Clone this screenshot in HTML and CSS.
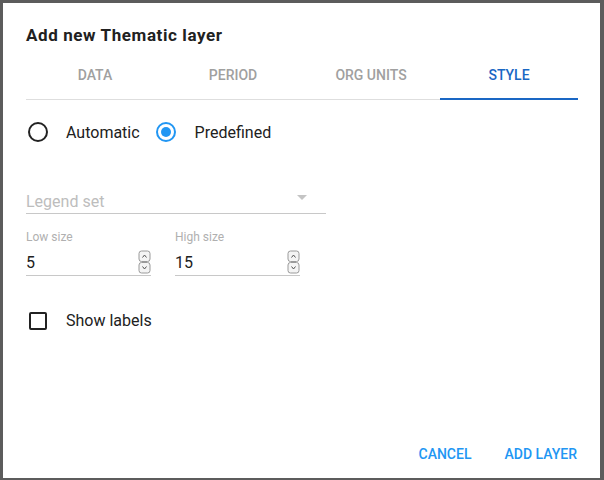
FILE: index.html
```html
<!DOCTYPE html>
<html>
<head>
<meta charset="utf-8">
<link rel="stylesheet" href="styles.css">
</head>
<body>
<div class="dialog">
  <h1 class="title">Add new Thematic layer</h1>
  <div class="tabs">
    <div class="tab">DATA</div>
    <div class="tab">PERIOD</div>
    <div class="tab">ORG UNITS</div>
    <div class="tab active">STYLE</div>
  </div>
  <div class="content">
    <div class="radios">
      <label class="radio"><span class="circle"></span><span class="rlabel">Automatic</span></label>
      <label class="radio checked"><span class="circle"><span class="dot"></span></span><span class="rlabel">Predefined</span></label>
    </div>
    <div class="select">
      <span class="placeholder">Legend set</span>
      <svg class="arrow" width="10" height="5" viewBox="0 0 10 5"><path d="M0 0 L10 0 L5 5 Z" fill="#c4c4c4"/></svg>
    </div>
    <div class="sizes">
      <div class="numfield">
        <div class="flabel">Low size</div>
        <div class="finput"><span class="val">5</span>
          <svg class="spin" width="13" height="24" viewBox="0 0 13 24">
            <rect x="1" y="1" width="11" height="10.5" rx="2.5" fill="#f4f4f4" stroke="#9a9a9a" stroke-width="1"/>
            <rect x="1" y="12.5" width="11" height="10.5" rx="2.5" fill="#f4f4f4" stroke="#9a9a9a" stroke-width="1"/>
            <path d="M4.5 7.5 L6.5 5 L8.5 7.5" fill="none" stroke="#555" stroke-width="1"/>
            <path d="M4.5 16.5 L6.5 19 L8.5 16.5" fill="none" stroke="#555" stroke-width="1"/>
          </svg>
        </div>
      </div>
      <div class="numfield">
        <div class="flabel">High size</div>
        <div class="finput"><span class="val">15</span>
          <svg class="spin" width="13" height="24" viewBox="0 0 13 24">
            <rect x="1" y="1" width="11" height="10.5" rx="2.5" fill="#f4f4f4" stroke="#9a9a9a" stroke-width="1"/>
            <rect x="1" y="12.5" width="11" height="10.5" rx="2.5" fill="#f4f4f4" stroke="#9a9a9a" stroke-width="1"/>
            <path d="M4.5 7.5 L6.5 5 L8.5 7.5" fill="none" stroke="#555" stroke-width="1"/>
            <path d="M4.5 16.5 L6.5 19 L8.5 16.5" fill="none" stroke="#555" stroke-width="1"/>
          </svg>
        </div>
      </div>
    </div>
    <label class="check"><span class="box"></span><span class="clabel">Show labels</span></label>
  </div>
  <div class="actions">
    <button class="btn">CANCEL</button>
    <button class="btn">ADD LAYER</button>
  </div>
</div>
</body>
</html>
```

FILE: styles.css
```css
html, body {
  margin: 0;
  padding: 0;
}
body {
  background: #5c5c5c;
  width: 604px;
  height: 480px;
  overflow: hidden;
  font-family: Roboto, "Liberation Sans", sans-serif;
}
.dialog {
  margin: 3px 0 0 3px;
  width: 597px;
  height: 475px;
  background: #fff;
  box-sizing: border-box;
  padding: 22px 22px 0 23px;
  display: flex;
  flex-direction: column;
}
.title {
  margin: 0;
  font-size: 17px;
  font-weight: 700;
  line-height: 20px;
  color: #212121;
  letter-spacing: 0.6px;
}
.tabs {
  display: flex;
  margin-top: 6px;
  width: 552px;
  border-bottom: 1px solid #dedede;
}
.tab {
  flex: 1;
  height: 48px;
  display: flex;
  align-items: center;
  justify-content: center;
  font-size: 14px;
  font-weight: 500;
  color: #a0a0a0;
  box-sizing: border-box;
}
.tab.active {
  color: #1a67c4;
  border-bottom: 2px solid #1a67c4;
  margin-bottom: -1px;
  height: 49px;
  padding-top: 1px;
}
.content {
  flex: 1;
}
.radios {
  display: flex;
  align-items: center;
  margin-top: 22px;
  height: 20px;
}
.radio {
  display: flex;
  align-items: center;
  margin-right: 14px;
}
.circle {
  width: 20px;
  height: 20px;
  box-sizing: border-box;
  border: 2px solid #222;
  border-radius: 50%;
  display: flex;
  align-items: center;
  justify-content: center;
  margin-left: 2px;
}
.radio.checked .circle {
  border-color: #2196f3;
}
.radio.checked .rlabel {
  margin-left: 19px;
}
.dot {
  width: 10px;
  height: 10px;
  border-radius: 50%;
  background: #2196f3;
}
.rlabel {
  margin-left: 18px;
  font-size: 16px;
  color: #212121;
}
.select {
  margin-top: 47px;
  width: 300px;
  height: 24px;
  border-bottom: 1px solid #c8c8c8;
  display: flex;
  align-items: center;
  justify-content: space-between;
  box-sizing: content-box;
}
.placeholder {
  font-size: 16px;
  color: #bdbdbd;
}
.arrow {
  margin-right: 19px;
  margin-top: -8px;
}
.sizes {
  display: flex;
  gap: 24px;
  margin-top: 16px;
}
.numfield {
  width: 125px;
}
.flabel {
  font-size: 12px;
  color: #b0b0b0;
  line-height: 14px;
}
.finput {
  margin-top: 5px;
  height: 26px;
  border-bottom: 1px solid #c8c8c8;
  display: flex;
  align-items: center;
  justify-content: space-between;
}
.val {
  font-size: 16px;
  color: #212121;
  margin-top: 1px;
}
.spin {
  margin-right: 0px;
}
.check {
  display: flex;
  align-items: center;
  margin-top: 35px;
}
.box {
  width: 18px;
  height: 18px;
  box-sizing: border-box;
  border: 2px solid #222;
  border-radius: 2px;
  margin-left: 3px;
}
.clabel {
  margin-left: 19px;
  font-size: 16px;
  color: #212121;
}
.actions {
  display: flex;
  justify-content: flex-end;
  gap: 17px;
  padding: 0 0 8px 0;
  margin-right: -7px;
}
.btn {
  background: none;
  border: none;
  padding: 8px 8px;
  font-family: Roboto, "Liberation Sans", sans-serif;
  font-size: 14px;
  font-weight: 500;
  color: #2196f3;
}
```
